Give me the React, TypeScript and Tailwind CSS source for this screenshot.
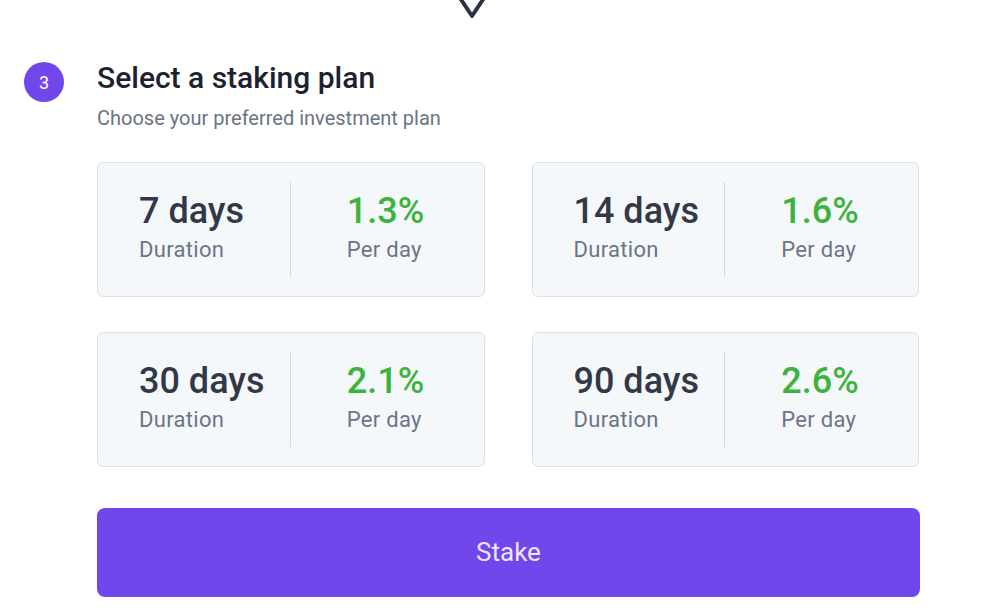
import React from 'react';

type Plan = { days: string; rate: string };

const plans: Plan[] = [
  { days: '7 days', rate: '1.3%' },
  { days: '14 days', rate: '1.6%' },
  { days: '30 days', rate: '2.1%' },
  { days: '90 days', rate: '2.6%' },
];

const PlanCard: React.FC<{ plan: Plan }> = ({ plan }) => {
  return (
    <div className="flex h-[135px] rounded-md border border-[#dde1e7] bg-[#f5f8fb] py-[19px]">
      <div className="flex w-1/2 flex-col justify-center border-r border-[#d3d7de] pb-[5px] pl-[41px]">
        <span className="text-[36px] font-medium leading-[40px] text-[#333846]">{plan.days}</span>
        <span className="mt-[6px] text-[22px] leading-[26px] tracking-[0.3px] text-[#6c7487]">Duration</span>
      </div>
      <div className="flex w-1/2 flex-col justify-center pb-[5px] pl-[56px]">
        <span className="text-[36px] font-medium leading-[40px] text-[#3cb33c]">{plan.rate}</span>
        <span className="mt-[6px] text-[22px] leading-[26px] tracking-[0.3px] text-[#6c7487]">Per day</span>
      </div>
    </div>
  );
};

const App: React.FC = () => {
  return (
    <div className="h-[610px] w-[988px] overflow-hidden bg-white font-['Roboto',sans-serif]">
      <svg className="ml-[452px] block" width="40" height="20" viewBox="0 0 40 20">
        <path d="M6 -5 L20 16 L34 -5" fill="none" stroke="#2e3243" strokeWidth="4" strokeLinejoin="round" strokeLinecap="round" />
      </svg>

      <div className="mt-[42px] flex gap-[33px] pl-[24px]">
        <div className="flex h-10 w-10 shrink-0 items-center justify-center rounded-full bg-[#7147eb] text-[18px] text-white">
          3
        </div>
        <div className="-mt-[2px]">
          <h2 className="text-[30px] font-medium leading-[36px] text-[#1d2231]">Select a staking plan</h2>
          <p className="mt-[10px] text-[20px] leading-[24px] text-[#6b7386]">Choose your preferred investment plan</p>
        </div>
      </div>

      <div className="ml-[97px] mt-[32px] w-[822px]">
        <div className="grid grid-cols-2 gap-x-[47px] gap-y-[35px]">
          {plans.map((p) => (
            <PlanCard key={p.days} plan={p} />
          ))}
        </div>
        <button className="mt-[41px] flex h-[89px] w-[823px] items-center justify-center rounded-lg bg-[#7146ea] text-[26px] text-[#ece6fc]">
          Stake
        </button>
      </div>
    </div>
  );
};

export default App;
